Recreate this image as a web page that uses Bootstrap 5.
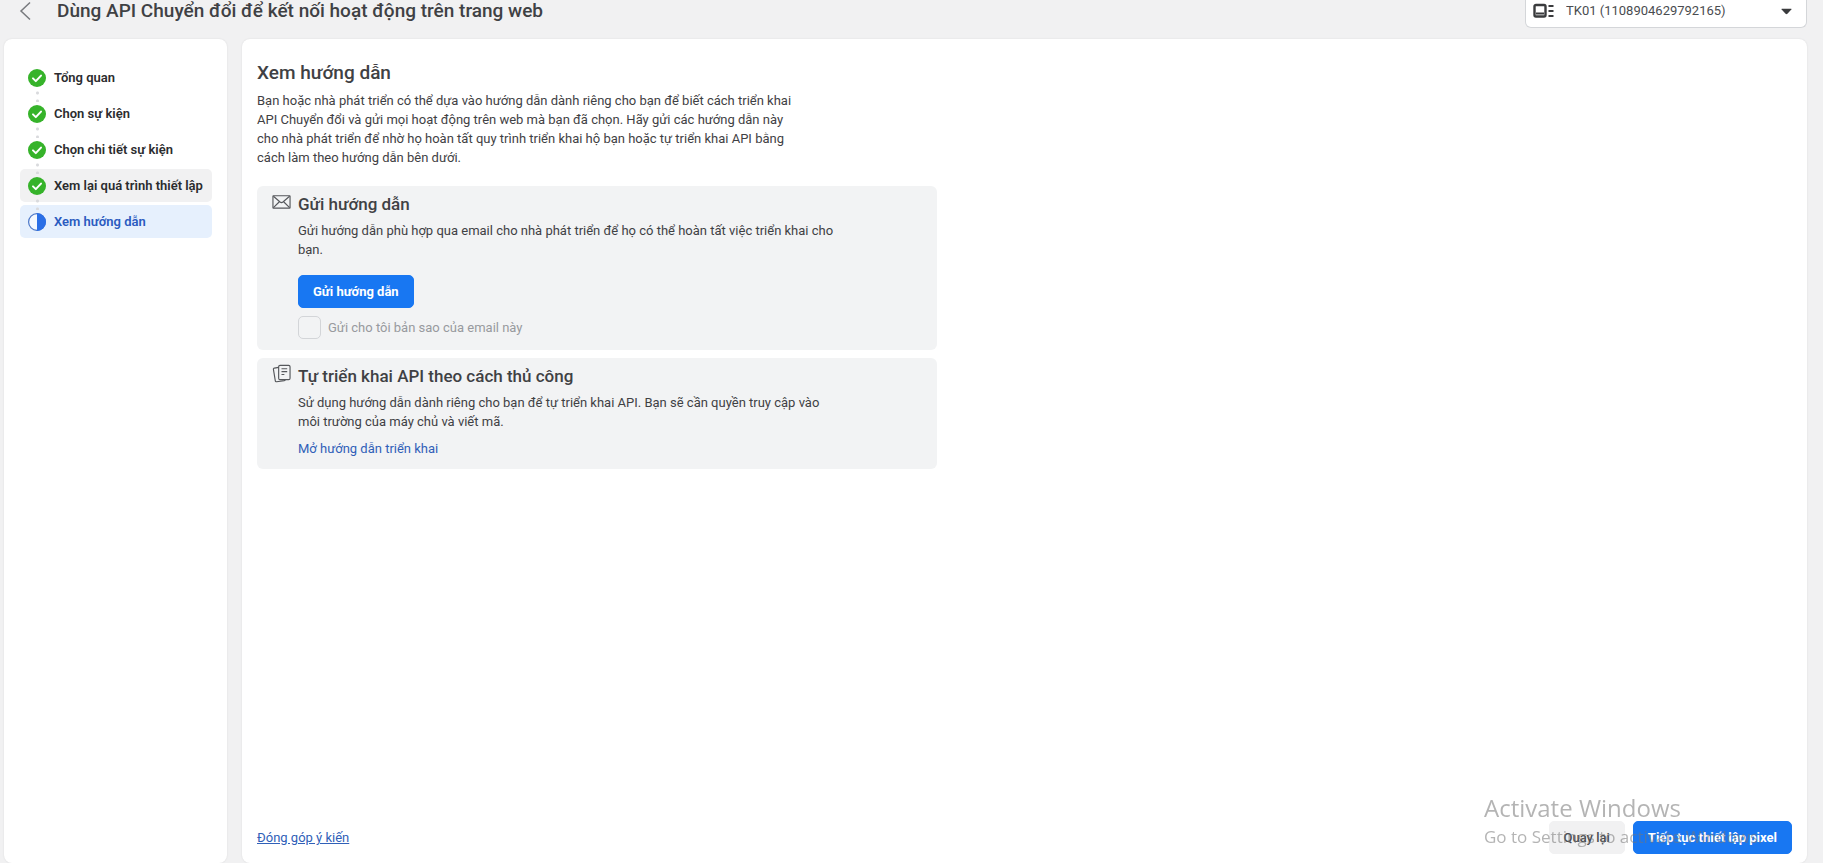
<!DOCTYPE html>
<html lang="vi">
<head>
<meta charset="utf-8">
<meta name="viewport" content="width=device-width, initial-scale=1">
<title>API Chuyển đổi</title>
<link href="https://cdn.jsdelivr.net/npm/bootstrap@5.3.0/dist/css/bootstrap.min.css" rel="stylesheet">
<script src="https://cdn.jsdelivr.net/npm/bootstrap@5.3.0/dist/js/bootstrap.bundle.min.js" defer></script>
<style>
  body { background: #f1f1f2; color: #3f4144; font-family: Roboto, "Liberation Sans", sans-serif; font-size: 13px; line-height: 19px; }
  .topbar { height: 39px; padding: 0 16px; }
  .page-title { font-size: 19px; line-height: 22px; font-weight: 500; margin: 0 0 0 21px; }
  .back { width: 20px; height: 22px; }
  .account { position: relative; width: 282px; height: 28px; background: #fff; border: 1px solid #d4d6d9; border-top: 0; border-radius: 0 0 6px 6px; }
  .account select { appearance: none; width: 100%; height: 21px; padding: 0 40px; border: 0; background: transparent; color: #4a4c50; font-size: 13px; }
  .account svg { position: absolute; pointer-events: none; }
  .account .kind { left: 7px; top: 3px; }
  .account .caret { right: 14px; top: 8px; }
  .panels { gap: 15px; padding: 0 16px 0 4px; }
  .panel { background: #fff; border-radius: 8px; box-shadow: 0 0 2px #0000001a; }
  .side { width: 223px; padding: 22px 15px 0 16px; }
  .steps { gap: 3px; }
  .step { height: 33px; padding: 0 8px; gap: 8px; border-radius: 5px; color: #2b2c2e; font-weight: 600; text-decoration: none; white-space: nowrap; position: relative; }
  .step.seen { background: #f1f1f2; }
  .step.now { background: #e6f0fd; color: #2a5bc0; }
  .step + .step::before { content: ""; position: absolute; left: 16px; top: -8px; width: 3px; height: 13px; background: radial-gradient(circle, #d9dadd 1px, transparent 2px) 0 0 / 3px 8px; }
  .content { padding: 22px 15px 9px 15px; min-width: 0; }
  h2 { font-size: 19px; line-height: 24px; font-weight: 500; margin: 0 0 6px; }
  .intro { max-width: 545px; margin-bottom: 19px; }
  .option { max-width: 680px; padding: 6px 16px 11px 15px; background: #f2f3f4; border-radius: 6px; column-gap: 7px; }
  .option h3 { font-size: 17px; line-height: 24px; font-weight: 500; margin: 0 0 5px; }
  .option p { max-width: 545px; margin: 0; }
  .option .glyph { width: 19px; height: 19px; }
  .btn { --bs-btn-font-size: 13px; --bs-btn-padding-y: 6px; --bs-btn-padding-x: 14px; --bs-btn-border-radius: 5px; --bs-btn-font-weight: 700; line-height: 19px; height: 33px; white-space: nowrap; }
  .btn-primary { --bs-btn-bg: #1877f2; --bs-btn-border-color: #1877f2; }
  .btn-plain { --bs-btn-bg: #f1f1f2; --bs-btn-color: #4a4c50; --bs-btn-border-color: #f1f1f2; --bs-btn-font-weight: 500; }
  .copy { gap: 7px; margin-top: 8px; }
  .copy .form-check-input { width: 23px; height: 23px; border: 1px solid #d3d5d8; border-radius: 5px; background: transparent; margin: 0; opacity: 1; }
  .copy label { color: #989a9e; }
  .lnk { color: #3060b8; }
  .watermark { position: fixed; left: calc(100% - 339px); bottom: 14px; color: #7777778c; font-family: "Open Sans", "Noto Sans", sans-serif; pointer-events: none; white-space: nowrap; }
  .watermark .top-line { font-size: 24px; line-height: 33px; }
  .watermark .sub-line { font-size: 17px; line-height: 25px; }
</style>
</head>
<body>
<div class="d-flex flex-column min-vh-100">
  <header class="topbar d-flex align-items-start">
    <a class="back" href="#" aria-label="Quay lại"><svg width="20" height="22" viewBox="0 0 20 22" fill="none" stroke="#77797d" stroke-width="1.5"><path d="M14 2.5 5 11l9 8.5"/></svg></a>
    <h1 class="page-title">Dùng API Chuyển đổi để kết nối hoạt động trên trang web</h1>
    <div class="account ms-auto">
      <svg class="kind" width="22" height="16" viewBox="0 0 22 16"><rect x="1.500" y="2" width="11" height="11.500" rx="1.500" fill="none" stroke="#3a3b3d" stroke-width="2.400"/><path d="M3 10.500h8M15.500 3h5M15.500 8h5M15.500 13h5" stroke="#3a3b3d" stroke-width="1.800"/></svg>
      <select aria-label="Tài khoản"><option>TK01 (1108904629792165)</option></select>
      <svg class="caret" width="11" height="7" viewBox="0 0 12 7"><path d="M1 .5h10q1 0 .3.900L7 6q-1 1-2 0L.7 1.400Q0 .5 1 .5Z" fill="#3a3b3d"/></svg>
    </div>
  </header>

  <div class="panels d-flex flex-grow-1">
    <nav class="panel side flex-shrink-0">
      <div class="steps d-flex flex-column">
        <a class="step d-flex align-items-center" href="#"><svg width="18" height="18" viewBox="0 0 18 18"><circle cx="9" cy="9" r="9" fill="#36b32a"/><path d="m5 9.400 2.800 2.700L13 6.600" fill="none" stroke="#fff" stroke-width="2" stroke-linecap="round" stroke-linejoin="round"/></svg>Tổng quan</a>
        <a class="step d-flex align-items-center" href="#"><svg width="18" height="18" viewBox="0 0 18 18"><circle cx="9" cy="9" r="9" fill="#36b32a"/><path d="m5 9.400 2.800 2.700L13 6.600" fill="none" stroke="#fff" stroke-width="2" stroke-linecap="round" stroke-linejoin="round"/></svg>Chọn sự kiện</a>
        <a class="step d-flex align-items-center" href="#"><svg width="18" height="18" viewBox="0 0 18 18"><circle cx="9" cy="9" r="9" fill="#36b32a"/><path d="m5 9.400 2.800 2.700L13 6.600" fill="none" stroke="#fff" stroke-width="2" stroke-linecap="round" stroke-linejoin="round"/></svg>Chọn chi tiết sự kiện</a>
        <a class="step seen d-flex align-items-center" href="#"><svg width="18" height="18" viewBox="0 0 18 18"><circle cx="9" cy="9" r="9" fill="#36b32a"/><path d="m5 9.400 2.800 2.700L13 6.600" fill="none" stroke="#fff" stroke-width="2" stroke-linecap="round" stroke-linejoin="round"/></svg>Xem lại quá trình thiết lập</a>
        <a class="step now d-flex align-items-center" href="#" aria-current="step"><svg width="18" height="18" viewBox="0 0 18 18"><circle cx="9" cy="9" r="8.400" fill="#f4f8fe" stroke="#4a76c8" stroke-width="1.200"/><path d="M9 0a9 9 0 0 1 0 18Z" fill="#2b6fe6"/></svg>Xem hướng dẫn</a>
      </div>
    </nav>

    <main class="panel content d-flex flex-column flex-grow-1">
      <h2>Xem hướng dẫn</h2>
      <p class="intro">Bạn hoặc nhà phát triển có thể dựa vào hướng dẫn dành riêng cho bạn để biết cách triển khai API Chuyển đổi và gửi mọi hoạt động trên web mà bạn đã chọn. Hãy gửi các hướng dẫn này cho nhà phát triển để nhờ họ hoàn tất quy trình triển khai hộ bạn hoặc tự triển khai API bằng cách làm theo hướng dẫn bên dưới.</p>

      <section class="option d-flex mb-2">
        <svg class="glyph flex-shrink-0" viewBox="0 0 20 20" fill="none" stroke="#55575b" stroke-width="1.200"><rect x="1" y="4" width="18" height="13" rx=".5"/><path d="m1.500 4.500 7 6q1.500 1.200 3 0l7-6M1.500 16.500l6-6M18.500 16.500l-6-6"/></svg>
        <div>
          <h3>Gửi hướng dẫn</h3>
          <p>Gửi hướng dẫn phù hợp qua email cho nhà phát triển để họ có thể hoàn tất việc triển khai cho bạn.</p>
          <button class="btn btn-primary mt-3" type="button">Gửi hướng dẫn</button>
          <div class="copy d-flex align-items-center">
            <input class="form-check-input" type="checkbox" id="copy" disabled>
            <label for="copy">Gửi cho tôi bản sao của email này</label>
          </div>
        </div>
      </section>

      <section class="option d-flex">
        <svg class="glyph flex-shrink-0" viewBox="0 0 20 20" fill="none" stroke="#55575b" stroke-width="1.200" stroke-linejoin="round"><rect x="7" y="1.500" width="12" height="15" rx="1.500"/><path d="M10 5h6M10 8h6M10 11h3M7 3.500l-4.500.8q-1.200.2-1 1.400l2 12q.2 1.200 1.400 1l8-1.200q1-.2 1-1"/></svg>
        <div>
          <h3>Tự triển khai API theo cách thủ công</h3>
          <p>Sử dụng hướng dẫn dành riêng cho bạn để tự triển khai API. Bạn sẽ cần quyền truy cập vào môi trường của máy chủ và viết mã.</p>
          <a class="lnk d-inline-block mt-2 text-decoration-none" href="#">Mở hướng dẫn triển khai</a>
        </div>
      </section>

      <footer class="d-flex align-items-center gap-2 mt-auto">
        <a class="lnk me-auto" href="#">Đóng góp ý kiến</a>
        <button class="btn btn-plain" type="button">Quay lại</button>
        <button class="btn btn-primary" type="button">Tiếp tục thiết lập pixel</button>
      </footer>
    </main>
  </div>
</div>
<div class="watermark">
  <div class="top-line">Activate Windows</div>
  <div class="sub-line">Go to Settings to activate Windows.</div>
</div>
</body>
</html>
